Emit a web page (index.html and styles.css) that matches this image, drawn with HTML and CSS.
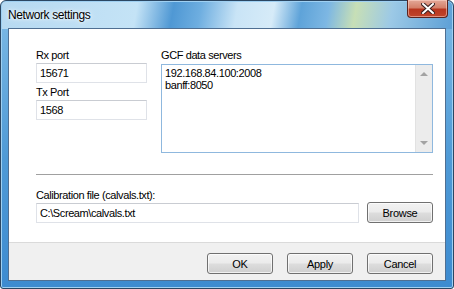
FILE: index.html
```html
<!DOCTYPE html>
<html lang="en">
<head>
  <meta charset="UTF-8">
  <title>Network settings</title>
  <link rel="stylesheet" href="styles.css">
</head>
<body>
  <div class="window">
    <div class="titlebar">
      <span class="title">Network settings</span>
      <div class="close">
        <svg width="14" height="11" viewBox="0 0 14 11">
          <path d="M2 1 L12 10 M12 1 L2 10" stroke="#3a2020" stroke-width="4" stroke-linecap="square"/>
          <path d="M2 1 L12 10 M12 1 L2 10" stroke="#fff" stroke-width="2" stroke-linecap="square"/>
        </svg>
      </div>
    </div>

    <div class="client">
      <div class="main">
        <div class="top-row">
          <div class="ports">
            <label>Rx port</label>
            <div class="textbox">15671</div>
            <label class="second">Tx Port</label>
            <div class="textbox">1568</div>
          </div>
          <div class="servers">
            <label class="list-label">GCF data servers</label>
            <div class="listbox">
              <div class="lines">
                <div>192.168.84.100:2008</div>
                <div>banff:8050</div>
              </div>
              <div class="scrollbar">
                <span class="arrow up"></span>
                <span class="arrow down"></span>
              </div>
            </div>
          </div>
        </div>

        <div class="separator"></div>

        <label>Calibration file (calvals.txt):</label>
        <div class="file-row">
          <div class="textbox wide">C:\Scream\calvals.txt</div>
          <button class="btn browse">Browse</button>
        </div>
      </div>

      <div class="footer">
        <button class="btn">OK</button>
        <button class="btn">Apply</button>
        <button class="btn">Cancel</button>
      </div>
    </div>
  </div>
</body>
</html>
```

FILE: styles.css
```css
body {
  margin: 0;
  background: #fff;
  font-family: 'Liberation Sans', Arial, sans-serif;
}
.window {
  width: 454px;
  height: 289px;
  box-sizing: border-box;
  border: 1px solid #2b4763;
  border-radius: 6px 6px 3px 3px;
  padding: 0 7px 7px;
  display: flex;
  flex-direction: column;
  background:
    linear-gradient(100deg,
      #b6d9f1 0%, #c4e3f6 30%, #4f98d4 38%, #6eaee0 44%,
      #c9e4f6 52%, #d6ebf8 60%, #5ea3d9 66%, #7db7e3 72%,
      #c7dfb6 78%, #9cc9e6 86%, #5c9fd6 100%) top / 100% 28px no-repeat,
    linear-gradient(180deg, #7fbbe6 0%, #4f9ad6 55%, #3d8bd0 100%);
  box-shadow: inset 0 0 0 1px #9fd0f2;
}
.titlebar {
  height: 27px;
  display: flex;
  justify-content: space-between;
  align-items: flex-start;
}
.title {
  font-size: 12px;
  letter-spacing: -0.4px;
  color: #000;
  margin-top: 7px;
  text-shadow: 0 0 6px #fff, 0 0 3px #fff;
}
.close {
  width: 41px;
  height: 18px;
  box-sizing: border-box;
  margin-top: -1px;
  margin-right: -2px;
  border: 1px solid #5a2420;
  border-top: none;
  border-radius: 0 0 4px 4px;
  background: linear-gradient(#e3a898 0%, #d4806a 45%, #b8361f 55%, #c0452b 100%);
  box-shadow: inset 0 0 0 1px rgba(255, 220, 210, 0.5);
  display: flex;
  justify-content: center;
  align-items: center;
}
.client {
  flex: 1;
  display: flex;
  flex-direction: column;
  border: 1px solid #4f6f92;
  background: #f0f0f0;
}
.main {
  height: 214px;
  box-sizing: border-box;
  padding: 20px 12px 0 27px;
  background: #fff;
  border-bottom: 1px solid #dadada;
}
label {
  display: block;
  font-size: 11px;
  line-height: 13px;
  letter-spacing: -0.4px;
  color: #000;
  margin-bottom: 1px;
}
label.second {
  margin-top: 3px;
}
.top-row {
  display: flex;
  gap: 14px;
}
.ports {
  width: 111px;
}
.textbox {
  height: 20px;
  box-sizing: border-box;
  border: 1px solid #dfe2e8;
  border-top-color: #c9ccd2;
  padding: 0 3px;
  font-size: 11px;
  line-height: 18px;
  letter-spacing: -0.4px;
  color: #000;
  background: #fff;
}
.servers {
  width: 272px;
}
.list-label {
  margin-bottom: 2px;
}
.listbox {
  height: 89px;
  box-sizing: border-box;
  border: 1px solid #8fb8de;
  display: flex;
}
.lines {
  flex: 1;
  padding: 2px 3px;
  font-size: 11px;
  line-height: 12px;
  letter-spacing: -0.4px;
  color: #000;
}
.scrollbar {
  width: 16px;
  background: #ececec;
  border-left: 1px solid #e2e2e2;
  display: flex;
  flex-direction: column;
  justify-content: space-between;
  align-items: center;
  padding: 7px 0 7px;
}
.arrow {
  width: 0;
  height: 0;
  border-left: 4px solid transparent;
  border-right: 4px solid transparent;
}
.arrow.up {
  border-bottom: 4px solid #a3a3a3;
}
.arrow.down {
  border-top: 4px solid #a3a3a3;
}
.separator {
  margin: 21px 0 13px;
  border-top: 1px solid #a0a0a0;
  border-bottom: 1px solid #fff;
}
.file-row {
  display: flex;
  gap: 8px;
  align-items: flex-start;
}
.textbox.wide {
  width: 323px;
}
.btn {
  width: 66px;
  height: 21px;
  box-sizing: border-box;
  border: 1px solid #707070;
  border-radius: 3px;
  background: linear-gradient(#f2f2f2 0%, #ebebeb 48%, #dddddd 52%, #cfcfcf 100%);
  box-shadow: inset 0 0 0 1px rgba(255, 255, 255, 0.7);
  font-family: 'Liberation Sans', Arial, sans-serif;
  font-size: 11px;
  letter-spacing: -0.3px;
  color: #000;
  padding: 0;
}
.browse {
  margin-top: -1px;
}
.footer {
  flex: 1;
  display: flex;
  justify-content: flex-end;
  gap: 14px;
  padding: 10px 12px 0 0;
}
```
